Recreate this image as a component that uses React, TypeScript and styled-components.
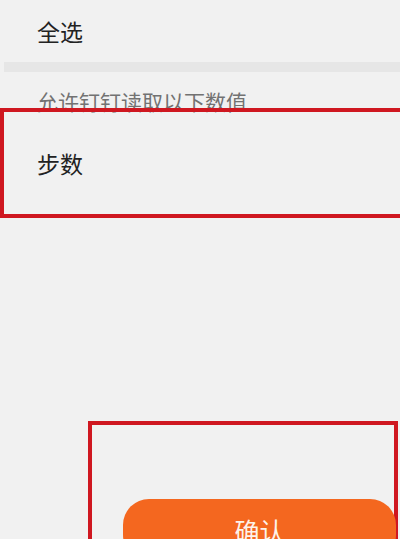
import React from "react";
import styled, { createGlobalStyle } from "styled-components";

const GlobalStyle = createGlobalStyle`
    *, *::before, *::after {
        box-sizing: border-box;
    }
    html, body {
        margin: 0;
        padding: 0;
        background: #f1f1f1;
        font-family: "Noto Sans CJK SC", "Noto Sans", sans-serif;
    }
    body {
        overflow: hidden;
    }
`;

const App = () => {
    return (
        <Page>
            <GlobalStyle />
            <SelectAllRow>
                <ItemText>全选</ItemText>
            </SelectAllRow>
            <Divider />
            <SectionLabel>允许钉钉读取以下数值</SectionLabel>
            <HighlightItem>
                <ItemText>步数</ItemText>
            </HighlightItem>
            <FooterMark>
                <ConfirmButton>确认</ConfirmButton>
            </FooterMark>
        </Page>
    );
};

const Page = styled.div`
    display: flex;
    flex-direction: column;
    width: 100%;
    height: 539px;
    overflow: hidden;
    background: #f1f1f1;

    & > * {
        flex-shrink: 0;
    }
`;

const SelectAllRow = styled.div`
    display: flex;
    align-items: center;
    height: 62px;
    padding-left: 37px;
`;

const ItemText = styled.span`
    color: #222;
    font-size: 23px;
    line-height: 1;
`;

const Divider = styled.div`
    height: 10px;
    margin-left: 4px;
    background: #e6e6e6;
`;

const SectionLabel = styled.div`
    display: flex;
    align-items: flex-end;
    height: 40px;
    padding-left: 37px;
    color: #727272;
    font-size: 21px;
    line-height: 1;
`;

const HighlightItem = styled.div`
    display: flex;
    align-items: center;
    height: 110px;
    margin-top: -4px;
    margin-right: -6px;
    padding-left: 33px;
    border: 4px solid #cf1720;
`;

const FooterMark = styled.div`
    display: flex;
    flex-direction: column;
    height: 150px;
    margin-top: 203px;
    margin-left: 88px;
    margin-right: 2px;
    padding: 74px 0 0 31px;
    border: 4px solid #cf1720;
    border-bottom: none;
`;

const ConfirmButton = styled.button`
    display: flex;
    align-items: center;
    justify-content: center;
    height: 62px;
    margin-right: -2px;
    border: none;
    border-radius: 26px;
    background: #f4671f;
    color: #fdf3ea;
    font-family: inherit;
    font-size: 25px;
    padding: 0;
    flex-shrink: 0;
`;

export default App;
